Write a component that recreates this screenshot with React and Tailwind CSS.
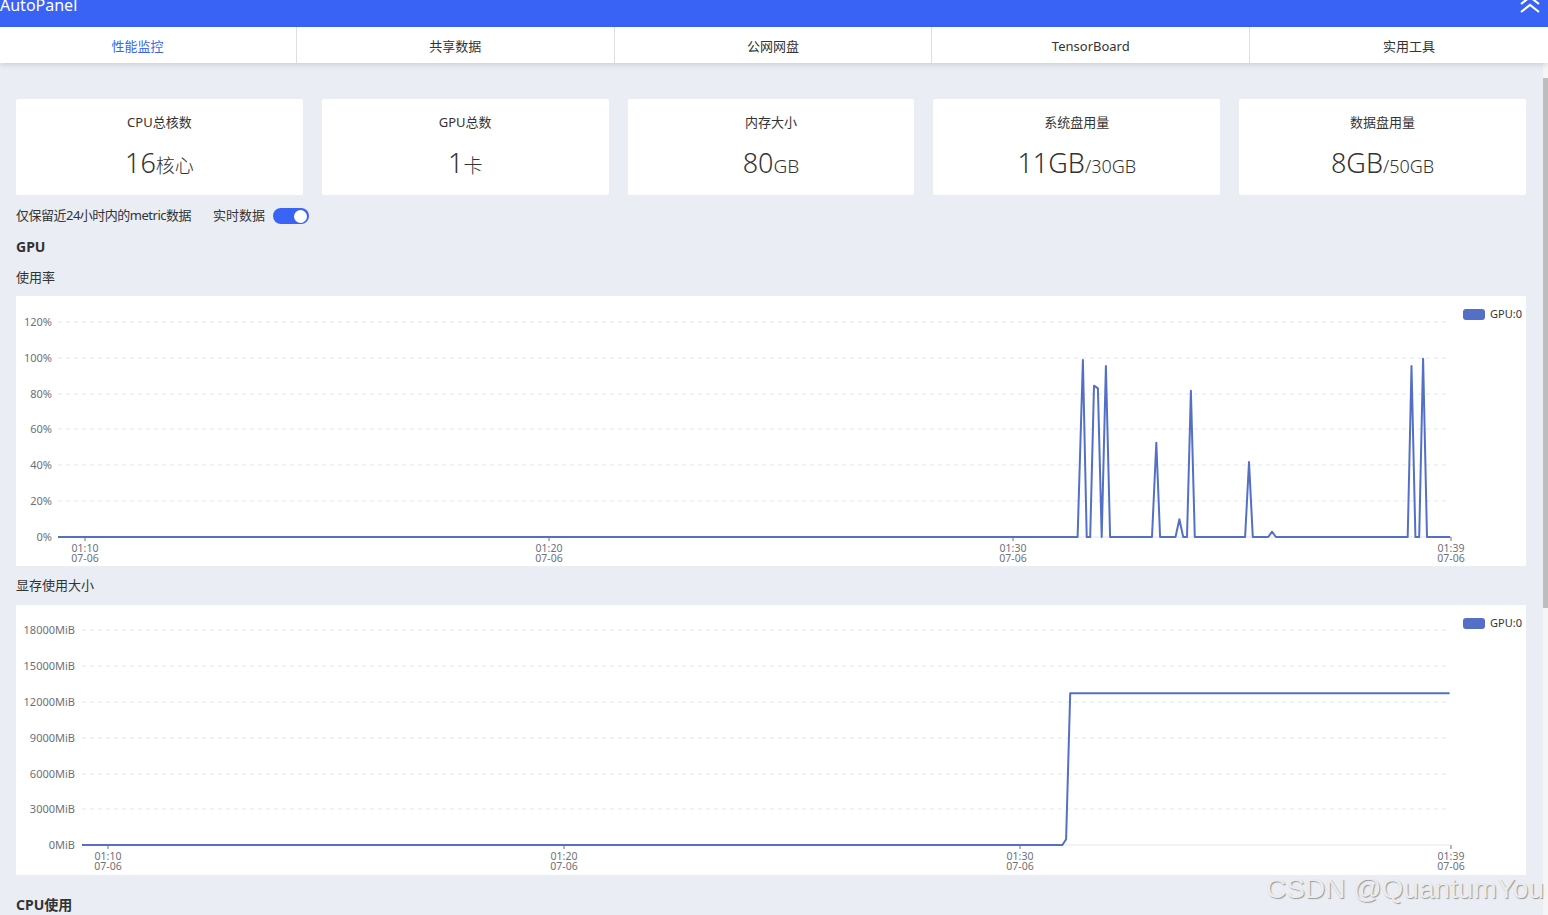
import React from "react";

const FONT = { fontFamily: '"Noto Sans", "Noto Sans CJK SC", sans-serif' };

const tabs = ["性能监控", "共享数据", "公网网盘", "TensorBoard", "实用工具"];

function StatCard({ title, value, unit, rest }) {
  return (
    <div className="bg-white rounded-[2px] h-[96px] flex flex-col items-center">
      <div className="mt-[14px] text-[13px] leading-[18px] text-[#333]">{title}</div>
      <div className="mt-[17px] h-[30px] flex items-baseline text-[#333]">
        <span className="text-[27px] font-light leading-[30px]">{value}</span>
        <span className="text-[19px] font-light leading-[30px]">{unit}</span>
        {rest && <span className="text-[18px] font-light leading-[30px]">{rest}</span>}
      </div>
    </div>
  );
}

function XTicks({ xs }) {
  return xs.map(([x, t]) => (
    <g key={t}>
      <line x1={x} x2={x} y1={0} y2={4} stroke="#6e7079" strokeWidth="1" />
      <text x={x} y={15} textAnchor="middle" fontSize="10.5" fill="#6e7079">{t}</text>
      <text x={x} y={25} textAnchor="middle" fontSize="10.5" fill="#6e7079">07-06</text>
    </g>
  ));
}

function Chart({ gridX, labelX, ys, labels, points, xs, base }) {
  return (
    <div className="bg-white h-[270px] w-[1510px]">
      <svg width="1510" height="270" style={FONT}>
        {ys.map((y, i) => (
          <g key={y}>
            {i < ys.length - 1 && (
              <line x1={gridX} x2={1434} y1={y} y2={y} stroke="#e0e6f1" strokeDasharray="4 4" />
            )}
            <text x={labelX} y={y + 4} textAnchor="end" fontSize="11" fill="#6e7079">{labels[i]}</text>
          </g>
        ))}
        <line x1={gridX} x2={1434} y1={base} y2={base} stroke="#e0e6f1" />
        <g transform={`translate(0, ${base})`}>
          <XTicks xs={xs} />
        </g>
        <polyline points={points} fill="none" stroke="#5470c6" strokeWidth="2" strokeLinejoin="round" />
        <rect x="1447" y="13" width="22" height="11" rx="3" fill="#5470c6" />
        <text x="1474" y="22" fontSize="11" fill="#333">GPU:0</text>
      </svg>
    </div>
  );
}

const gpuPts = [
  [42, 241], [1061.6, 241], [1066.9, 64], [1070.7, 241], [1074.2, 241], [1078, 89.7], [1081.9, 92.3],
  [1085.7, 241], [1089.9, 70], [1094.1, 241], [1136, 241], [1140.3, 146.7], [1144.1, 241],
  [1159.5, 241], [1163.4, 223.3], [1167.2, 241], [1171, 241], [1174.9, 94.7], [1178.8, 241],
  [1229.1, 241], [1233, 166], [1236.8, 241], [1252.2, 241], [1256, 235.7], [1259.9, 241],
  [1391.7, 241], [1395.5, 70], [1399.4, 241], [1403.2, 241], [1407.1, 62.7], [1411, 241], [1434.3, 241],
].map((p) => p.join(",")).join(" ");

const memPts = [[66, 240], [1046.4, 240], [1050.1, 234.3], [1054.2, 88.3], [1433.6, 88.3]]
  .map((p) => p.join(",")).join(" ");

export default function App() {
  return (
    <div className="h-[915px] w-full flex flex-col overflow-hidden bg-[#eaedf4] relative" style={FONT}>
      <div className="h-[27px] bg-[#3963f4] flex justify-between items-start shrink-0">
        <div className="text-white text-[16px] leading-[16px] -mt-[3px]">AutoPanel</div>
        <svg width="24" height="27" className="mr-[6px]">
          <polyline points="3,4 12,-3 21,4" fill="none" stroke="white" strokeWidth="2.2" />
          <polyline points="3,12 12,5 21,12" fill="none" stroke="white" strokeWidth="2.2" />
        </svg>
      </div>
      <div className="h-[36px] bg-white shrink-0 overflow-hidden shadow-[0_2px_5px_rgba(0,0,0,0.12)] z-10">
        <div className="-ml-[21px] w-[1589px] grid grid-cols-5 h-full">
          {tabs.map((t, i) => (
            <div
              key={t}
              className={`flex items-center justify-center pt-[3px] text-[13px] ${i === 0 ? "text-[#3963f4]" : "text-[#333]"} ${i < 4 ? "border-r border-[#dcdfe6]" : ""}`}
            >
              {t}
            </div>
          ))}
        </div>
      </div>
      <div className="flex flex-1 min-h-0">
        <div className="flex-1 min-w-0 pl-[16px] pr-[17px]">
          <div className="mt-[36px] grid grid-cols-5 gap-[19px]">
            <StatCard title="CPU总核数" value="16" unit="核心" />
            <StatCard title="GPU总数" value="1" unit="卡" />
            <StatCard title="内存大小" value="80" unit="GB" />
            <StatCard title="系统盘用量" value="11GB" rest="/30GB" />
            <StatCard title="数据盘用量" value="8GB" rest="/50GB" />
          </div>
          <div className="mt-[13px] h-[16px] flex items-center text-[13px] text-[#333]">
            <span className="tracking-[-0.5px]">仅保留近24小时内的metric数据</span>
            <span className="ml-[22px]">实时数据</span>
            <div className="ml-[8px] w-[36px] h-[16px] rounded-full bg-[#3963f4] flex items-center justify-end pr-[2px]">
              <div className="w-[13px] h-[13px] rounded-full bg-white" />
            </div>
          </div>
          <div className="mt-[13px] h-[20px] leading-[20px] text-[14px] font-bold text-[#333]">GPU</div>
          <div className="mt-[10px] h-[20px] leading-[20px] text-[13px] text-[#333]">使用率</div>
          <div className="mt-[9px]">
            <Chart
              gridX={42}
              labelX={36}
              base={241}
              ys={[26, 62, 98, 133, 169, 205, 241]}
              labels={["120%", "100%", "80%", "60%", "40%", "20%", "0%"]}
              points={gpuPts}
              xs={[[69, "01:10"], [533, "01:20"], [997, "01:30"], [1435, "01:39"]]}
            />
          </div>
          <div className="mt-[9px] h-[20px] leading-[20px] text-[13px] text-[#333]">显存使用大小</div>
          <div className="mt-[10px]">
            <Chart
              gridX={66}
              labelX={59}
              base={240}
              ys={[25, 61, 97, 133, 169, 204, 240]}
              labels={["18000MiB", "15000MiB", "12000MiB", "9000MiB", "6000MiB", "3000MiB", "0MiB"]}
              points={memPts}
              xs={[[92, "01:10"], [548, "01:20"], [1004, "01:30"], [1435, "01:39"]]}
            />
          </div>
          <div className="mt-[20px] h-[20px] leading-[20px] text-[14px] font-bold text-[#333]">CPU使用</div>
        </div>
        <div className="w-[5px] shrink-0 bg-[#f5f5f5] flex flex-col">
          <div className="mt-[15px] h-[530px] bg-[#bdbdbd]" />
        </div>
      </div>
      <div
        className="absolute right-[4px] bottom-[10px] text-[28px] leading-[32px] text-[#ececec]"
        style={{ fontFamily: '"Liberation Sans", Arial, sans-serif', textShadow: "1px 1px 1px #999" }}
      >
        CSDN @QuantumYou
      </div>
    </div>
  );
}
